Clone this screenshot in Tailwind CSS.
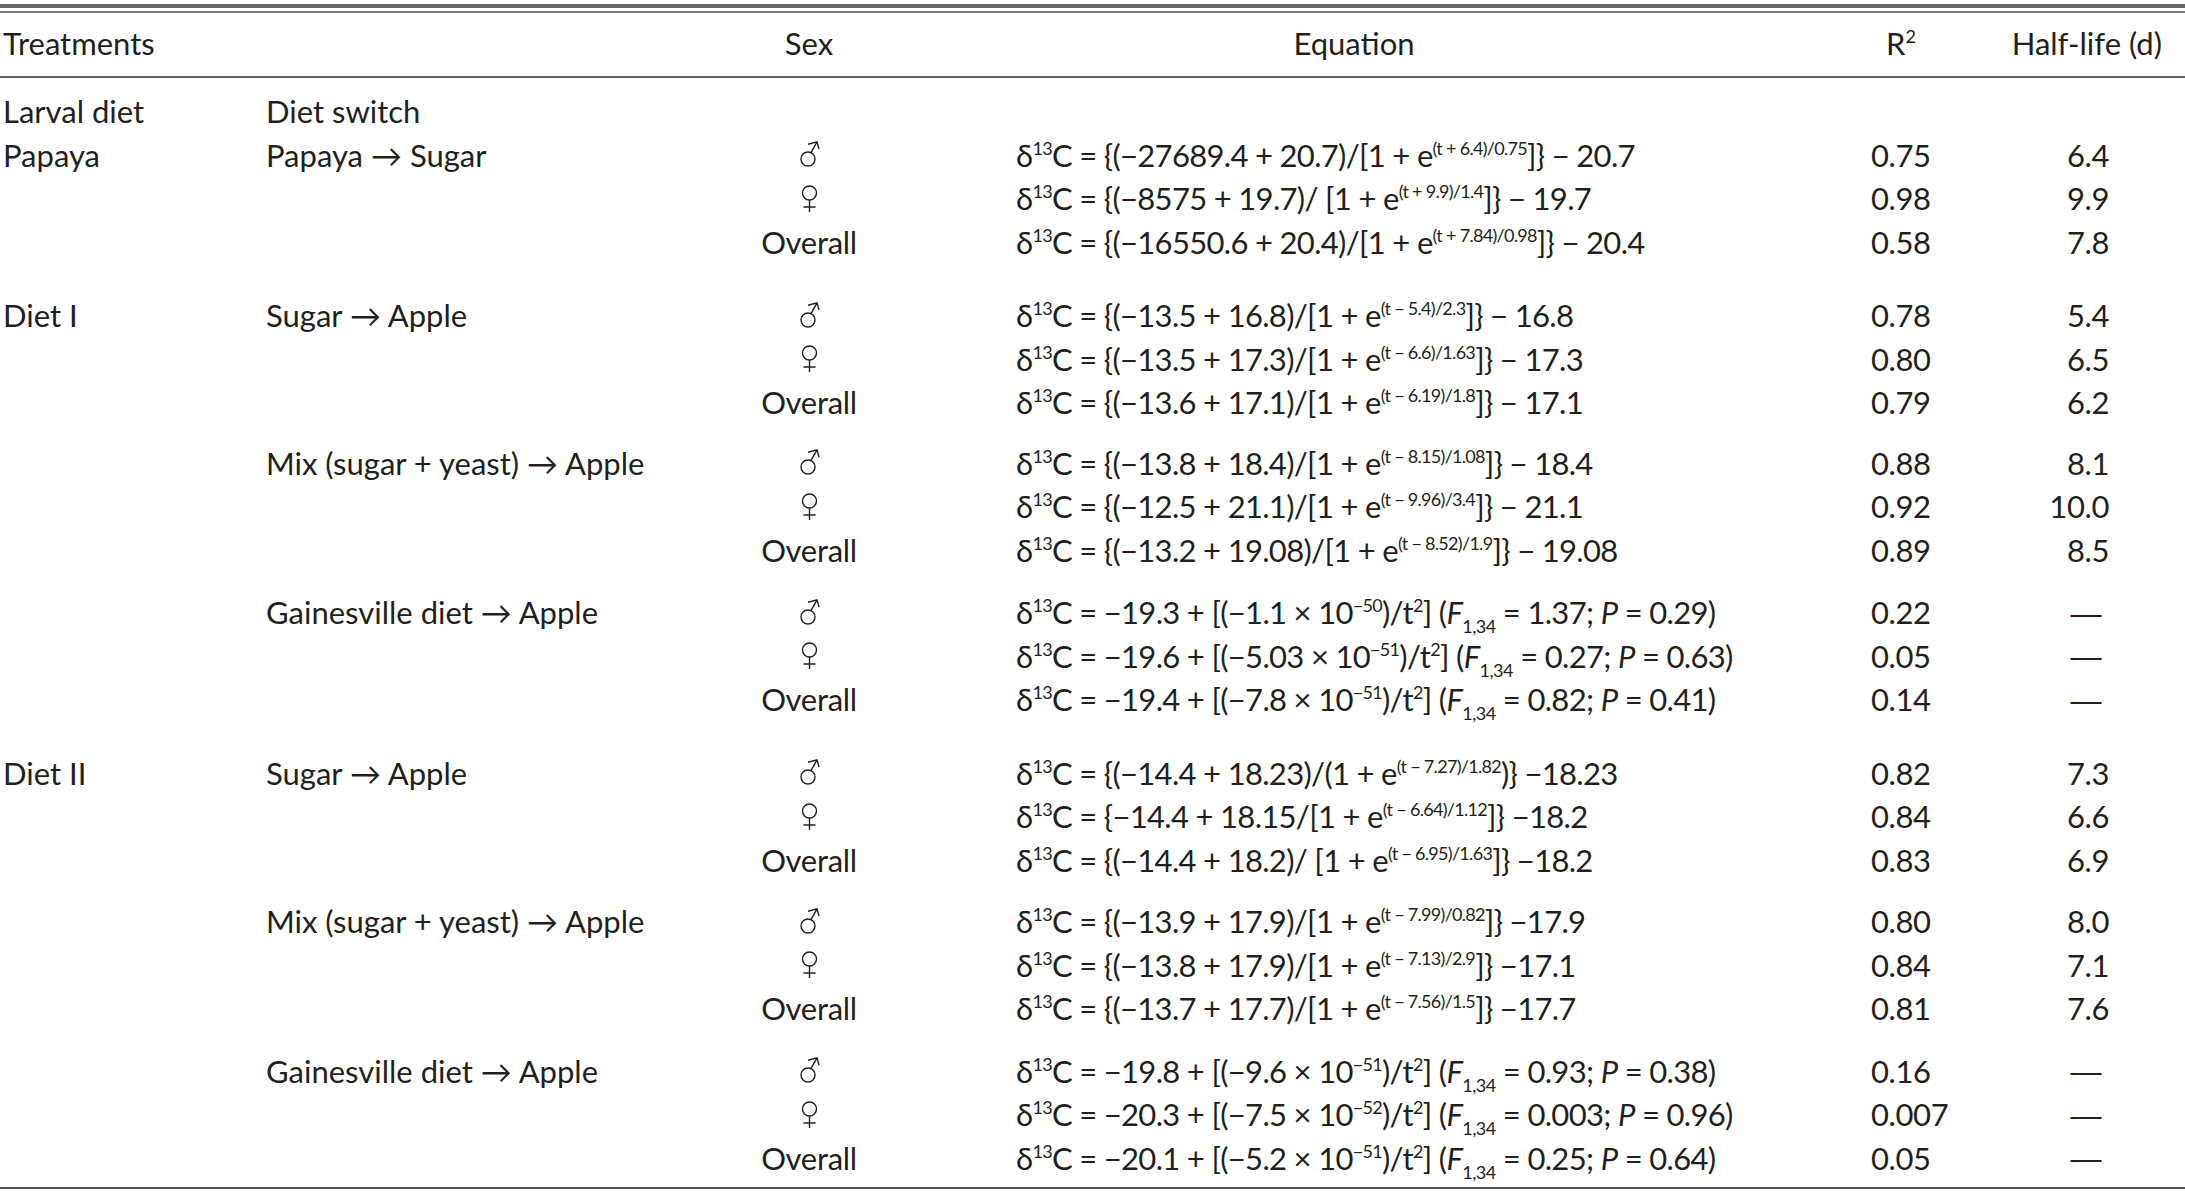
<!DOCTYPE html>
<html lang="en">
<head>
  <meta charset="UTF-8" />
  <title>Table</title>
  <script src="https://cdn.jsdelivr.net/npm/@tailwindcss/browser@4"></script>
</head>
<body class="bg-white text-[#231f20] font-['Lato','Noto_Sans',sans-serif] text-[31px] leading-none">
<div class="w-[2185px] h-[1194px] overflow-hidden pt-1">
  <div class="h-1 bg-[#666]"></div>
  <div class="h-[2px] mt-[3px] bg-[#777] mb-[11px]"></div>
  <table class="w-[2185px] table-fixed border-collapse [&_td]:p-0 [&_td]:h-[43.5px] [&_sup]:text-[18px] [&_sup]:tracking-[-0.7px] [&_sup]:align-baseline [&_sup]:relative [&_sup]:top-[-12px] [&_sup]:leading-none [&_sub]:text-[18px] [&_sub]:tracking-[-0.5px] [&_sub]:align-baseline [&_sub]:relative [&_sub]:top-[9px] [&_sub]:leading-none">
    <colgroup>
      <col class="w-[266px]" /><col class="w-[437px]" /><col class="w-[212px]" /><col class="w-[878px]" /><col class="w-[167px]" /><col class="w-[225px]" />
    </colgroup>
    <thead>
      <tr class="border-b-2 border-[#666] [&_th]:font-normal [&_th]:h-[53px] [&_th]:pb-[14px]">
        <th class="text-left pl-[3px]">Treatments</th>
        <th></th>
        <th class="text-center">Sex</th>
        <th class="text-center">Equation</th>
        <th class="text-left pl-[93px]">R<sup>2</sup></th>
        <th class="text-right pr-[23px]">Half-life (d)</th>
      </tr>
    </thead>
    <tbody class="[&_td:nth-child(1)]:pl-[3px] [&_td:nth-child(3)]:text-center [&_td:nth-child(3)]:tracking-[-0.3px] [&_td:nth-child(4)]:pl-[101px] [&_td:nth-child(4)]:tracking-[-0.68px] [&_td:nth-child(5)]:pl-[78px] [&_td:nth-child(5)]:tracking-[-0.4px] [&_td:nth-child(6)]:text-right [&_td:nth-child(6)]:pr-[76px] [&_td:nth-child(6)]:tracking-[-0.4px] [&_svg]:mx-auto [&_svg]:w-5 [&_svg]:h-7 [&_svg]:overflow-visible [&_b]:font-normal [&_b]:font-['Liberation_Sans'] [&_b]:mr-[8px]">
      <tr class="h-[13px]"><td class="!h-[13px]" colspan="6"></td></tr>
      <tr><td>Larval diet</td><td>Diet switch</td><td></td><td></td><td></td><td></td></tr>
      <tr><td>Papaya</td><td>Papaya → Sugar</td><td><svg aria-label="♂" viewBox="0 0 20 28" fill="none" stroke="#231f20" stroke-width="1.4"><circle cx="9" cy="18" r="7"/><path d="M12 11.6 18 .8M9 3.2 18 .8 20 8"/></svg></td><td>δ<sup>13</sup>C = {(−27689.4 + 20.7)/[1 + e<sup>(t + 6.4)/0.75</sup>]} − 20.7</td><td>0.75</td><td>6.4</td></tr>
      <tr><td></td><td></td><td><svg aria-label="♀" viewBox="0 0 20 28" fill="none" stroke="#231f20" stroke-width="1.4"><circle cx="10.5" cy="8" r="7"/><path d="M10.5 15V27M4.5 22H16.5"/></svg></td><td>δ<sup>13</sup>C = {(−8575 + 19.7)/ [1 + e<sup>(t + 9.9)/1.4</sup>]} − 19.7</td><td>0.98</td><td>9.9</td></tr>
      <tr><td></td><td></td><td>Overall</td><td>δ<sup>13</sup>C = {(−16550.6 + 20.4)/[1 + e<sup>(t + 7.84)/0.98</sup>]} − 20.4</td><td>0.58</td><td>7.8</td></tr>

      <tr class="h-[30px]"><td class="!h-[30px]" colspan="6"></td></tr>
      <tr><td>Diet I</td><td>Sugar → Apple</td><td><svg aria-label="♂" viewBox="0 0 20 28" fill="none" stroke="#231f20" stroke-width="1.4"><circle cx="9" cy="18" r="7"/><path d="M12 11.6 18 .8M9 3.2 18 .8 20 8"/></svg></td><td>δ<sup>13</sup>C = {(−13.5 + 16.8)/[1 + e<sup>(t − 5.4)/2.3</sup>]} − 16.8</td><td>0.78</td><td>5.4</td></tr>
      <tr><td></td><td></td><td><svg aria-label="♀" viewBox="0 0 20 28" fill="none" stroke="#231f20" stroke-width="1.4"><circle cx="10.5" cy="8" r="7"/><path d="M10.5 15V27M4.5 22H16.5"/></svg></td><td>δ<sup>13</sup>C = {(−13.5 + 17.3)/[1 + e<sup>(t − 6.6)/1.63</sup>]} − 17.3</td><td>0.80</td><td>6.5</td></tr>
      <tr><td></td><td></td><td>Overall</td><td>δ<sup>13</sup>C = {(−13.6 + 17.1)/[1 + e<sup>(t − 6.19)/1.8</sup>]} − 17.1</td><td>0.79</td><td>6.2</td></tr>

      <tr class="h-[17px]"><td class="!h-[17px]" colspan="6"></td></tr>
      <tr><td></td><td>Mix (sugar + yeast) → Apple</td><td><svg aria-label="♂" viewBox="0 0 20 28" fill="none" stroke="#231f20" stroke-width="1.4"><circle cx="9" cy="18" r="7"/><path d="M12 11.6 18 .8M9 3.2 18 .8 20 8"/></svg></td><td>δ<sup>13</sup>C = {(−13.8 + 18.4)/[1 + e<sup>(t − 8.15)/1.08</sup>]} − 18.4</td><td>0.88</td><td>8.1</td></tr>
      <tr><td></td><td></td><td><svg aria-label="♀" viewBox="0 0 20 28" fill="none" stroke="#231f20" stroke-width="1.4"><circle cx="10.5" cy="8" r="7"/><path d="M10.5 15V27M4.5 22H16.5"/></svg></td><td>δ<sup>13</sup>C = {(−12.5 + 21.1)/[1 + e<sup>(t − 9.96)/3.4</sup>]} − 21.1</td><td>0.92</td><td>10.0</td></tr>
      <tr><td></td><td></td><td>Overall</td><td>δ<sup>13</sup>C = {(−13.2 + 19.08)/[1 + e<sup>(t − 8.52)/1.9</sup>]} − 19.08</td><td>0.89</td><td>8.5</td></tr>

      <tr class="h-[19px]"><td class="!h-[19px]" colspan="6"></td></tr>
      <tr><td></td><td>Gainesville diet → Apple</td><td><svg aria-label="♂" viewBox="0 0 20 28" fill="none" stroke="#231f20" stroke-width="1.4"><circle cx="9" cy="18" r="7"/><path d="M12 11.6 18 .8M9 3.2 18 .8 20 8"/></svg></td><td>δ<sup>13</sup>C = −19.3 + [(−1.1 × 10<sup>−50</sup>)/t<sup>2</sup>] (<em>F</em><sub>1,34</sub> = 1.37; <em>P</em> = 0.29)</td><td>0.22</td><td><b>—</b></td></tr>
      <tr><td></td><td></td><td><svg aria-label="♀" viewBox="0 0 20 28" fill="none" stroke="#231f20" stroke-width="1.4"><circle cx="10.5" cy="8" r="7"/><path d="M10.5 15V27M4.5 22H16.5"/></svg></td><td>δ<sup>13</sup>C = −19.6 + [(−5.03 × 10<sup>−51</sup>)/t<sup>2</sup>] (<em>F</em><sub>1,34</sub> = 0.27; <em>P</em> = 0.63)</td><td>0.05</td><td><b>—</b></td></tr>
      <tr><td></td><td></td><td>Overall</td><td>δ<sup>13</sup>C = −19.4 + [(−7.8 × 10<sup>−51</sup>)/t<sup>2</sup>] (<em>F</em><sub>1,34</sub> = 0.82; <em>P</em> = 0.41)</td><td>0.14</td><td><b>—</b></td></tr>

      <tr class="h-[30px]"><td class="!h-[30px]" colspan="6"></td></tr>
      <tr><td>Diet II</td><td>Sugar → Apple</td><td><svg aria-label="♂" viewBox="0 0 20 28" fill="none" stroke="#231f20" stroke-width="1.4"><circle cx="9" cy="18" r="7"/><path d="M12 11.6 18 .8M9 3.2 18 .8 20 8"/></svg></td><td>δ<sup>13</sup>C = {(−14.4 + 18.23)/(1 + e<sup>(t − 7.27)/1.82</sup>)} −18.23</td><td>0.82</td><td>7.3</td></tr>
      <tr><td></td><td></td><td><svg aria-label="♀" viewBox="0 0 20 28" fill="none" stroke="#231f20" stroke-width="1.4"><circle cx="10.5" cy="8" r="7"/><path d="M10.5 15V27M4.5 22H16.5"/></svg></td><td>δ<sup>13</sup>C = {−14.4 + 18.15/[1 + e<sup>(t − 6.64)/1.12</sup>]} −18.2</td><td>0.84</td><td>6.6</td></tr>
      <tr><td></td><td></td><td>Overall</td><td>δ<sup>13</sup>C = {(−14.4 + 18.2)/ [1 + e<sup>(t − 6.95)/1.63</sup>]} −18.2</td><td>0.83</td><td>6.9</td></tr>

      <tr class="h-[18px]"><td class="!h-[18px]" colspan="6"></td></tr>
      <tr><td></td><td>Mix (sugar + yeast) → Apple</td><td><svg aria-label="♂" viewBox="0 0 20 28" fill="none" stroke="#231f20" stroke-width="1.4"><circle cx="9" cy="18" r="7"/><path d="M12 11.6 18 .8M9 3.2 18 .8 20 8"/></svg></td><td>δ<sup>13</sup>C = {(−13.9 + 17.9)/[1 + e<sup>(t − 7.99)/0.82</sup>]} −17.9</td><td>0.80</td><td>8.0</td></tr>
      <tr><td></td><td></td><td><svg aria-label="♀" viewBox="0 0 20 28" fill="none" stroke="#231f20" stroke-width="1.4"><circle cx="10.5" cy="8" r="7"/><path d="M10.5 15V27M4.5 22H16.5"/></svg></td><td>δ<sup>13</sup>C = {(−13.8 + 17.9)/[1 + e<sup>(t − 7.13)/2.9</sup>]} −17.1</td><td>0.84</td><td>7.1</td></tr>
      <tr><td></td><td></td><td>Overall</td><td>δ<sup>13</sup>C = {(−13.7 + 17.7)/[1 + e<sup>(t − 7.56)/1.5</sup>]} −17.7</td><td>0.81</td><td>7.6</td></tr>

      <tr class="h-[19px]"><td class="!h-[19px]" colspan="6"></td></tr>
      <tr><td></td><td>Gainesville diet → Apple</td><td><svg aria-label="♂" viewBox="0 0 20 28" fill="none" stroke="#231f20" stroke-width="1.4"><circle cx="9" cy="18" r="7"/><path d="M12 11.6 18 .8M9 3.2 18 .8 20 8"/></svg></td><td>δ<sup>13</sup>C = −19.8 + [(−9.6 × 10<sup>−51</sup>)/t<sup>2</sup>] (<em>F</em><sub>1,34</sub> = 0.93; <em>P</em> = 0.38)</td><td>0.16</td><td><b>—</b></td></tr>
      <tr><td></td><td></td><td><svg aria-label="♀" viewBox="0 0 20 28" fill="none" stroke="#231f20" stroke-width="1.4"><circle cx="10.5" cy="8" r="7"/><path d="M10.5 15V27M4.5 22H16.5"/></svg></td><td>δ<sup>13</sup>C = −20.3 + [(−7.5 × 10<sup>−52</sup>)/t<sup>2</sup>] (<em>F</em><sub>1,34</sub> = 0.003; <em>P</em> = 0.96)</td><td>0.007</td><td><b>—</b></td></tr>
      <tr><td></td><td></td><td>Overall</td><td>δ<sup>13</sup>C = −20.1 + [(−5.2 × 10<sup>−51</sup>)/t<sup>2</sup>] (<em>F</em><sub>1,34</sub> = 0.25; <em>P</em> = 0.64)</td><td>0.05</td><td><b>—</b></td></tr>
    </tbody>
  </table>
  <div class="h-[2px] mt-[7px] bg-[#555]"></div>
</div>
</body>
</html>
